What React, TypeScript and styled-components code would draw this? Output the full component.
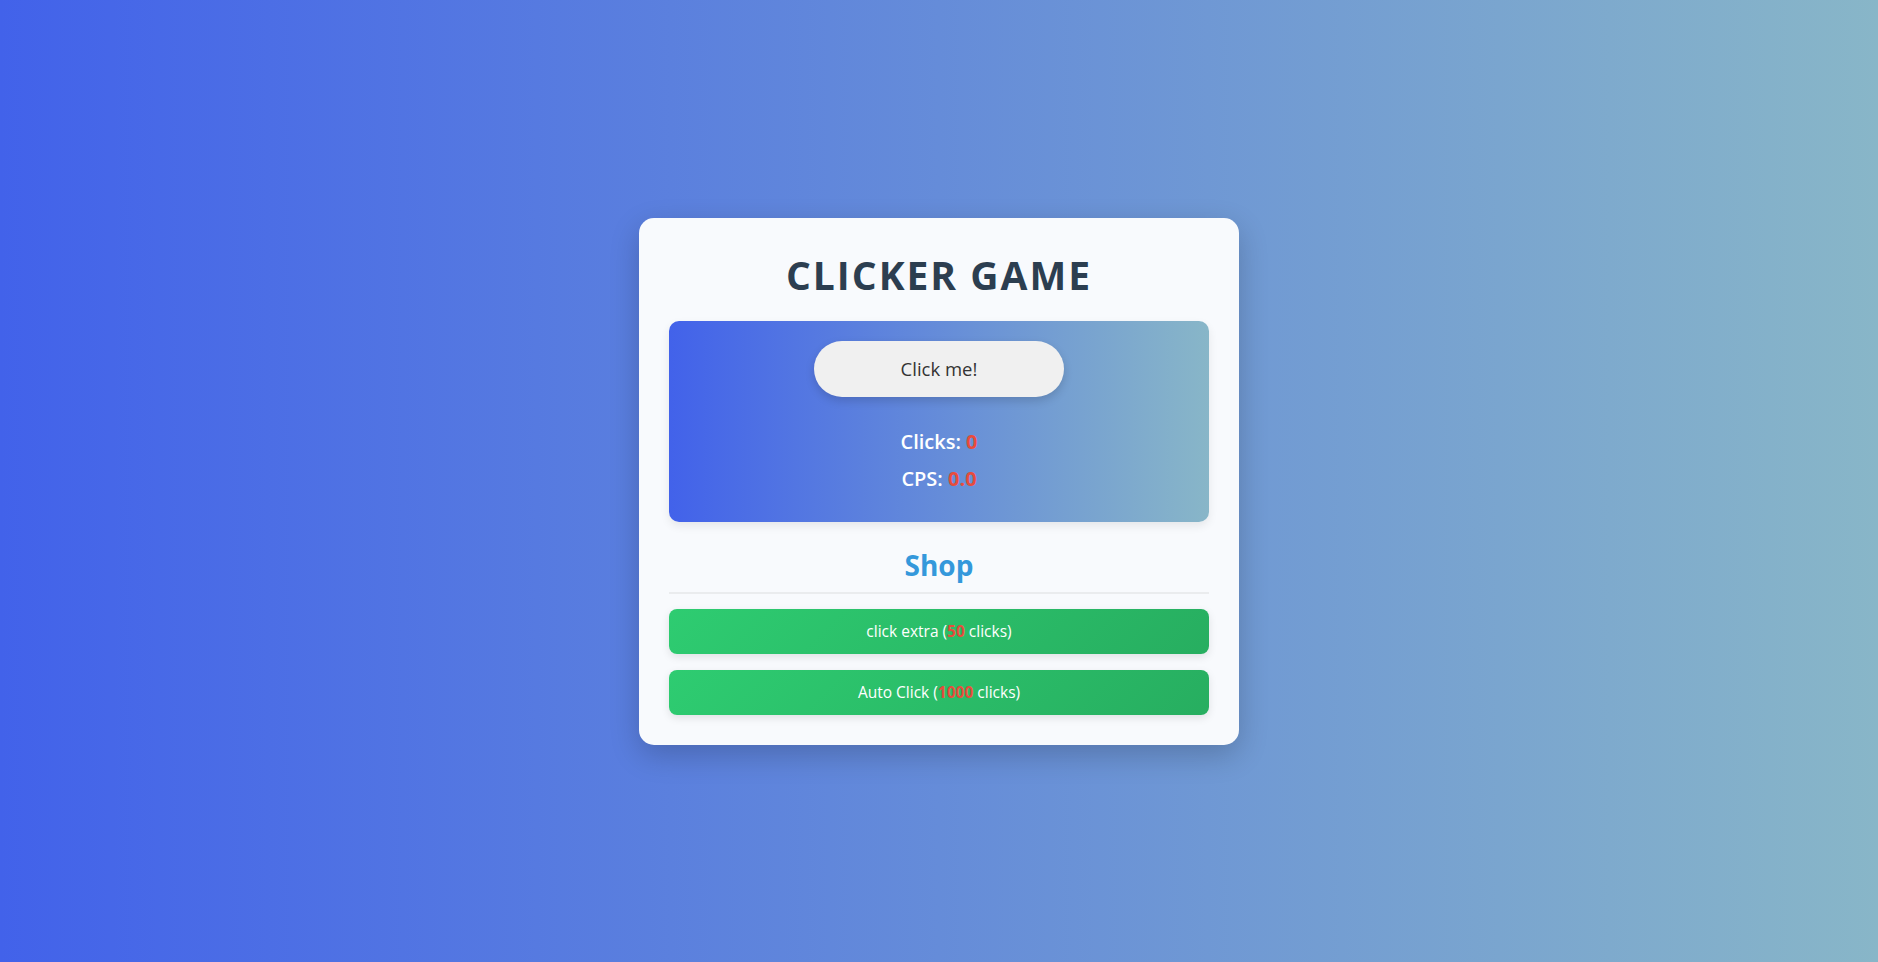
import React, { useEffect, useState } from 'react';
import styled, { createGlobalStyle } from 'styled-components';

const GlobalStyle = createGlobalStyle`
  * {
    box-sizing: border-box;
  }

  body {
    margin: 0;
    font-family: 'Open Sans', 'Noto Sans', sans-serif;
    background: linear-gradient(90deg, #4262ea, #88b6c8);
    min-height: 100vh;
  }
`;

const Page = styled.div`
  min-height: 100vh;
  display: flex;
  align-items: center;
  justify-content: center;
`;

const Card = styled.div`
  width: 600px;
  padding: 30px;
  background: #f8fafd;
  border-radius: 15px;
  box-shadow: 0 10px 30px rgba(0, 0, 0, 0.2);
  text-align: center;
`;

const Title = styled.h1`
  margin: 0 0 20px;
  font-size: 39px;
  line-height: 53px;
  font-weight: 700;
  letter-spacing: 2px;
  color: #2c3e50;
`;

const ClickArea = styled.div`
  padding: 20px 20px 30px;
  border-radius: 10px;
  background: linear-gradient(90deg, #4262ea, #88b6c8);
  box-shadow: 0 4px 10px rgba(0, 0, 0, 0.08);
`;

const ClickButton = styled.button`
  width: 250px;
  height: 56px;
  border: none;
  border-radius: 28px;
  background: #f0f0f0;
  color: #333;
  font-family: inherit;
  font-size: 18.5px;
  cursor: pointer;
  box-shadow: 0 4px 10px rgba(0, 0, 0, 0.15);
  transition: transform 0.1s;

  &:active {
    transform: scale(0.97);
  }
`;

const Stats = styled.div`
  margin-top: 31px;
  display: flex;
  flex-direction: column;
  gap: 10px;
`;

const Stat = styled.div`
  font-size: 20px;
  line-height: 27px;
  font-weight: 600;
  color: #fff;
`;

const Value = styled.span`
  color: #e74c3c;
  font-weight: 700;
`;

const ShopTitle = styled.h2`
  margin: 24px 0 0;
  padding-bottom: 8px;
  font-size: 28px;
  line-height: 38px;
  font-weight: 700;
  color: #3498db;
  border-bottom: 2px solid #eaecee;
`;

const ShopList = styled.div`
  margin-top: 15px;
  display: flex;
  flex-direction: column;
  gap: 16px;
`;

const ShopButton = styled.button`
  width: 100%;
  height: 45px;
  border: none;
  border-radius: 8px;
  background: linear-gradient(135deg, #2ecc71, #27ae60);
  color: #fff;
  font-family: inherit;
  font-size: 15.5px;
  cursor: pointer;
  box-shadow: 0 3px 8px rgba(0, 0, 0, 0.1);
`;

const Cost = styled.span`
  color: #e74c3c;
  font-weight: 700;
`;

const App: React.FC = () => {
  const [clicks, setClicks] = useState<number>(0);
  const [perClick, setPerClick] = useState<number>(1);
  const [autoClickers, setAutoClickers] = useState<number>(0);
  const [extraCost, setExtraCost] = useState<number>(50);
  const [autoCost, setAutoCost] = useState<number>(1000);

  useEffect(() => {
    if (autoClickers === 0) return;
    const timer = setInterval(() => setClicks(c => c + autoClickers), 1000);
    return () => clearInterval(timer);
  }, [autoClickers]);

  const buyExtra = () => {
    if (clicks < extraCost) return;
    setClicks(c => c - extraCost);
    setPerClick(p => p + 1);
    setExtraCost(c => Math.round(c * 1.5));
  };

  const buyAuto = () => {
    if (clicks < autoCost) return;
    setClicks(c => c - autoCost);
    setAutoClickers(a => a + 1);
    setAutoCost(c => Math.round(c * 1.5));
  };

  return (
    <>
      <GlobalStyle />
      <Page>
        <Card>
          <Title>CLICKER GAME</Title>
          <ClickArea>
            <ClickButton onClick={() => setClicks(c => c + perClick)}>Click me!</ClickButton>
            <Stats>
              <Stat>
                Clicks: <Value>{clicks}</Value>
              </Stat>
              <Stat>
                CPS: <Value>{autoClickers.toFixed(1)}</Value>
              </Stat>
            </Stats>
          </ClickArea>
          <ShopTitle>Shop</ShopTitle>
          <ShopList>
            <ShopButton onClick={buyExtra}>
              click extra (<Cost>{extraCost}</Cost> clicks)
            </ShopButton>
            <ShopButton onClick={buyAuto}>
              Auto Click (<Cost>{autoCost}</Cost> clicks)
            </ShopButton>
          </ShopList>
        </Card>
      </Page>
    </>
  );
};

export default App;
